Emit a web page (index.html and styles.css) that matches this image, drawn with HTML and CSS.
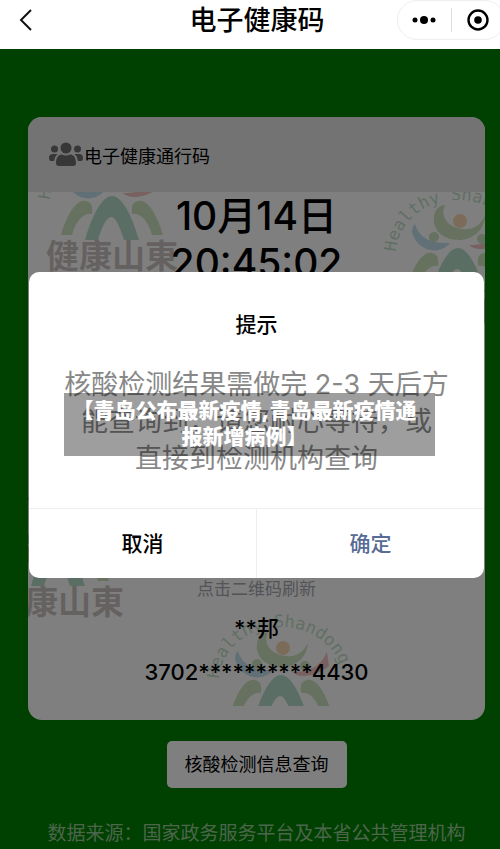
FILE: index.html
```html
<!DOCTYPE html>
<html lang="zh-CN">
<head>
    <meta charset="UTF-8">
    <meta name="viewport" content="width=device-width, initial-scale=1.0">
    <title>电子健康码</title>
    <link rel="stylesheet" href="styles.css">
</head>
<body>
    <!-- shared watermark artwork -->
    <svg class="defs" width="0" height="0" aria-hidden="true">
        <defs>
            <path id="arc" d="M-62 -40 A62 54 0 0 1 62 -36"/>
            <g id="logo">
                <text class="logo-arc"><textPath href="#arc">Healthy Shandong</textPath></text>
                <circle cx="2" cy="-71" r="7" fill="#f08a24"/>
                <path d="M-13 -87 C-19 -74 -8 -64 5 -63 C14 -62 21 -65 27 -76 C26 -61 14 -52 1 -52 C-16 -52 -26 -63 -24 -76 C-23 -83 -18 -87 -13 -87Z" fill="#6fae45"/>
                <circle cx="-24" cy="-55" r="5" fill="#6fae45"/>
                <circle cx="24" cy="-53" r="5" fill="#6fae45"/>
                <path d="M-43 -68 C-39 -55 -29 -48 -8 -49 C-16 -39 -32 -39 -41 -50 C-46 -56 -48 -63 -43 -68Z" fill="#4aa8c8"/>
                <path d="M46 -67 C40 -54 31 -47 11 -47 C17 -41 33 -41 48 -53Z" fill="#d8504a"/>
                <path d="M-51 -5 C-45 -25 -36 -41 -26 -39 C-21 -38 -19 -35 -20 -26 C-30 -28 -37 -16 -40 -5Z" fill="#6fae45"/>
                <path d="M51 -5 C45 -25 36 -41 26 -39 C21 -38 19 -35 20 -26 C30 -28 37 -16 40 -5Z" fill="#6fae45"/>
                <path d="M-27 0 C-19 -28 -9 -44 0 -44 C9 -44 19 -28 27 0 H12 C7 -16 3 -23 -1 -23 C-5 -23 -10 -14 -14 0Z" fill="#2f9d68"/>
                <text class="logo-name" x="0" y="28">健康山東</text>
            </g>
        </defs>
    </svg>

    <header class="navbar">
        <button class="back" type="button" aria-label="返回">
            <svg width="14" height="22" viewBox="0 0 14 22"><path d="M12 1 L2 11 L12 21" fill="none" stroke="#111" stroke-width="2"/></svg>
        </button>
        <h1>电子健康码</h1>
        <div class="capsule">
            <button type="button" aria-label="更多">
                <svg width="24" height="10" viewBox="0 0 24 10"><circle cx="3" cy="5" r="2.5"/><circle cx="12" cy="5" r="4"/><circle cx="21" cy="5" r="2.5"/></svg>
            </button>
            <button type="button" aria-label="关闭">
                <svg width="22" height="22" viewBox="0 0 22 22"><circle cx="11" cy="11" r="9.5" fill="none" stroke="#000" stroke-width="2.4"/><circle cx="11" cy="11" r="3.8"/></svg>
            </button>
        </div>
    </header>

    <main class="screen">
        <section class="card">
            <div class="card-header">
                <svg width="34" height="25" viewBox="0 0 34 25" fill="#6e6e6e">
                    <circle cx="17" cy="6" r="5.5"/>
                    <circle cx="5.5" cy="7" r="3.5"/>
                    <circle cx="28.5" cy="7" r="3.5"/>
                    <path d="M7 21 C7 15 10 12.5 13 12.5 Q17 14.5 21 12.5 C24 12.5 27 15 27 21 Q27 24 24 24 H10 Q7 24 7 21Z"/>
                    <path d="M0 16 Q0 12 4 12 H8.500 Q5.500 14.500 5 19 H2 Q0 19 0 16Z"/>
                    <path d="M34 16 Q34 12 30 12 H25.500 Q28.500 14.500 29 19 H32 Q34 19 34 16Z"/>
                </svg>
                <h2>电子健康通行码</h2>
            </div>
            <div class="card-body">
                <svg class="watermark mark-top-left" viewBox="-80 -112 160 150" aria-hidden="true"><use href="#logo"/></svg>
                <svg class="watermark mark-top-right" viewBox="-80 -112 160 150" aria-hidden="true"><use href="#logo"/></svg>
                <svg class="watermark mark-bottom-left" viewBox="-80 -112 160 150" aria-hidden="true"><use href="#logo"/></svg>
                <svg class="watermark mark-bottom" viewBox="-80 -112 160 99" aria-hidden="true"><use href="#logo"/></svg>

                <div class="clock">10月14日<br>20:45:02</div>
                <div class="qr-area"></div>
                <p class="hint">点击二维码刷新</p>
                <p class="name">**邦</p>
                <p class="id-number">3702**********4430</p>
            </div>
        </section>

        <button class="query" type="button">核酸检测信息查询</button>
        <p class="source">数据来源：国家政务服务平台及本省公共管理机构</p>

        <div class="mask">
            <div class="dialog" role="dialog" aria-labelledby="dialogTitle">
                <h3 id="dialogTitle">提示</h3>
                <p class="message">核酸检测结果需做完 2-3 天后方<br>能查询到，请您耐心等待，或<br>直接到检测机构查询</p>
                <div class="actions">
                    <button type="button">取消</button>
                    <button type="button" class="confirm">确定</button>
                </div>
                <div class="caption">【青岛公布最新疫情,青岛最新疫情通<br>报新增病例】</div>
            </div>
        </div>
    </main>
</body>
</html>
```

FILE: styles.css
```css
:root {
    --green: #008000;
    --text: #000;
    --link: #576b95;
    --line: #eee;
}

* {
    margin: 0;
    padding: 0;
    box-sizing: border-box;
}

body {
    min-height: 100vh;
    display: flex;
    flex-direction: column;
    background-color: var(--green);
    color: var(--text);
    font-family: Inter, "Noto Sans CJK SC", sans-serif;
    overflow-x: hidden;
}

button {
    border: none;
    background: none;
    color: inherit;
    font-family: inherit;
    cursor: pointer;
}

.defs {
    position: absolute;
}

/* nav bar */
.navbar {
    display: flex;
    height: 49px;
    padding-left: 19px;
    background-color: #fff;
    overflow: hidden;
}

.back {
    width: 98px;
    height: 39px;
    text-align: left;
}

.back svg {
    display: block;
}

.navbar h1 {
    flex: 1;
    font-size: 27px;
    font-weight: 500;
    line-height: 42px;
    text-align: center;
}

.capsule {
    display: flex;
    align-items: center;
    width: 108px;
    height: 40px;
    margin-right: -5px;
    border: 1px solid var(--line);
    border-radius: 20px;
}

.capsule button {
    flex: 1;
    display: flex;
    align-items: center;
    justify-content: center;
    height: 24px;
}

.capsule button + button {
    border-left: 1px solid #ddd;
}

/* page content */
.screen {
    position: relative;
    flex: 1;
    display: flex;
    flex-direction: column;
    align-items: center;
    padding: 68px 15px 0 28px;
}

.card {
    width: 100%;
    border-radius: 14px;
    background-color: #fff;
    overflow: hidden;
}

.card-header {
    display: flex;
    align-items: center;
    height: 75px;
    padding-left: 21px;
    background-color: #e6e6e6;
}

.card-header h2 {
    font-size: 18px;
    font-weight: 400;
    margin-left: 1px;
}

.card-body {
    position: relative;
    padding-bottom: 26px;
    text-align: center;
    overflow: hidden;
}

.clock {
    position: relative;
    font-size: 39px;
    font-weight: 500;
    line-height: 47px;
}

.qr-area {
    height: 290px;
}

.hint,
.name,
.id-number {
    position: relative;
}

.hint {
    color: #a8a8b0;
    font-size: 17px;
    line-height: 26px;
}

.name,
.id-number {
    font-size: 22px;
    font-weight: 500;
    line-height: 44px;
}

.name {
    margin-top: 4px;
}

/* watermarks */
.watermark {
    position: absolute;
    width: 160px;
    opacity: 0.35;
}

.mark-top-left {
    left: 4px;
    top: -64px;
}

.mark-top-right {
    right: -53px;
    top: -12px;
}

.mark-bottom-left {
    left: -50px;
    top: 282px;
}

.mark-bottom {
    left: 173px;
    top: 415px;
}

.logo-arc {
    font-family: "DejaVu Sans Mono", monospace;
    font-size: 17px;
    fill: #4fa063;
}

.logo-name {
    font-family: "Noto Sans CJK TC", sans-serif;
    font-size: 33px;
    font-weight: 700;
    text-anchor: middle;
    fill: #6b5550;
}

.query {
    margin-top: 21px;
    padding: 0 18px;
    border-radius: 5px;
    background-color: #fff;
    font-size: 18px;
    line-height: 47px;
}

.source {
    margin-top: 31px;
    color: #99cc99;
    font-size: 19px;
    line-height: 30px;
    white-space: nowrap;
}

/* dialog */
.mask {
    position: absolute;
    inset: 0;
    padding: 223px 16px 0 29px;
    background-color: rgba(0, 0, 0, 0.5);
}

.dialog {
    position: relative;
    border-radius: 10px;
    background-color: #fff;
    text-align: center;
}

.dialog h3 {
    padding-top: 38px;
    font-size: 21px;
    font-weight: 500;
    line-height: 30px;
}

.message {
    padding: 26px 0 31px;
    color: #888;
    font-size: 27px;
    line-height: 37px;
    white-space: nowrap;
}

.actions {
    display: flex;
    border-top: 1px solid var(--line);
}

.actions button {
    flex: 1;
    font-size: 21px;
    font-weight: 500;
    line-height: 69px;
}

.actions button + button {
    border-left: 1px solid var(--line);
}

.actions .confirm {
    color: var(--link);
}

.caption {
    position: absolute;
    top: 121px;
    left: 35px;
    right: 49px;
    padding: 5px 10px 6px 0;
    background-color: rgba(0, 0, 0, 0.38);
    color: #fff;
    font-size: 21px;
    font-weight: 900;
    line-height: 26px;
    white-space: nowrap;
}
```
